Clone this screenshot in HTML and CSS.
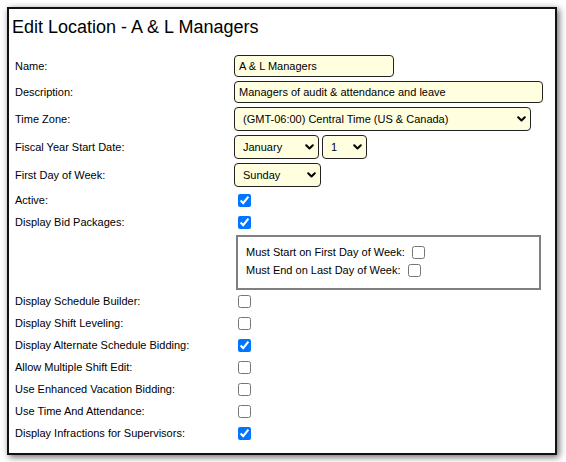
FILE: index.html
```html
<!DOCTYPE html>
<html>
<head>
<meta charset="utf-8">
<link rel="stylesheet" href="styles.css">
</head>
<body>
<div class="panel">
  <h1 class="title">Edit Location - A &amp; L Managers</h1>
  <div class="form">
    <div class="row field">
      <label class="lbl">Name:</label>
      <div class="val"><input class="txt w-name" type="text" value="A &amp; L Managers"></div>
    </div>
    <div class="row field">
      <label class="lbl">Description:</label>
      <div class="val"><input class="txt w-desc" type="text" value="Managers of audit &amp; attendance and leave"></div>
    </div>
    <div class="row field">
      <label class="lbl">Time Zone:</label>
      <div class="val">
        <span class="sel w-tz"><select><option>(GMT-06:00) Central Time (US &amp; Canada)</option></select><svg class="chev" width="9" height="6" viewBox="0 0 9 6"><polyline points="1.2,1.2 4.5,4.5 7.8,1.2" fill="none" stroke="#000" stroke-width="2" stroke-linecap="round" stroke-linejoin="round"/></svg></span>
      </div>
    </div>
    <div class="row field">
      <label class="lbl">Fiscal Year Start Date:</label>
      <div class="val pair">
        <span class="sel w-month"><select><option>January</option></select><svg class="chev" width="9" height="6" viewBox="0 0 9 6"><polyline points="1.2,1.2 4.5,4.5 7.8,1.2" fill="none" stroke="#000" stroke-width="2" stroke-linecap="round" stroke-linejoin="round"/></svg></span>
        <span class="sel w-day"><select><option>1</option></select><svg class="chev" width="9" height="6" viewBox="0 0 9 6"><polyline points="1.2,1.2 4.5,4.5 7.8,1.2" fill="none" stroke="#000" stroke-width="2" stroke-linecap="round" stroke-linejoin="round"/></svg></span>
      </div>
    </div>
    <div class="row field last-field">
      <label class="lbl">First Day of Week:</label>
      <div class="val">
        <span class="sel w-week"><select><option>Sunday</option></select><svg class="chev" width="9" height="6" viewBox="0 0 9 6"><polyline points="1.2,1.2 4.5,4.5 7.8,1.2" fill="none" stroke="#000" stroke-width="2" stroke-linecap="round" stroke-linejoin="round"/></svg></span>
      </div>
    </div>
    <div class="row chk">
      <label class="lbl">Active:</label>
      <div class="val"><input type="checkbox" checked></div>
    </div>
    <div class="row chk">
      <label class="lbl">Display Bid Packages:</label>
      <div class="val"><input type="checkbox" checked></div>
    </div>
    <div class="row boxrow">
      <div class="lbl"></div>
      <div class="subbox">
        <div class="subline">Must Start on First Day of Week: <input type="checkbox"></div>
        <div class="subline">Must End on Last Day of Week: <input type="checkbox"></div>
      </div>
    </div>
    <div class="row chk">
      <label class="lbl">Display Schedule Builder:</label>
      <div class="val"><input type="checkbox"></div>
    </div>
    <div class="row chk">
      <label class="lbl">Display Shift Leveling:</label>
      <div class="val"><input type="checkbox"></div>
    </div>
    <div class="row chk">
      <label class="lbl">Display Alternate Schedule Bidding:</label>
      <div class="val"><input type="checkbox" checked></div>
    </div>
    <div class="row chk">
      <label class="lbl">Allow Multiple Shift Edit:</label>
      <div class="val"><input type="checkbox"></div>
    </div>
    <div class="row chk">
      <label class="lbl">Use Enhanced Vacation Bidding:</label>
      <div class="val"><input type="checkbox"></div>
    </div>
    <div class="row chk">
      <label class="lbl">Use Time And Attendance:</label>
      <div class="val"><input type="checkbox"></div>
    </div>
    <div class="row chk">
      <label class="lbl">Display Infractions for Supervisors:</label>
      <div class="val"><input type="checkbox" checked></div>
    </div>
  </div>
</div>
</body>
</html>
```

FILE: styles.css
```css
html, body {
  margin: 0;
  padding: 0;
  background: #fff;
}
body {
  padding: 7px;
  font-family: "Liberation Sans", Arial, sans-serif;
  font-size: 11px;
  color: #000;
}
.panel {
  box-sizing: border-box;
  width: 550px;
  height: 448px;
  border: 2px solid #111;
  background: #fff;
  box-shadow: 2px 2px 7px rgba(0, 0, 0, 0.6);
}
.title {
  margin: 0;
  padding: 8px 0 0 3px;
  font-size: 18px;
  font-weight: normal;
  line-height: 21px;
  color: #000;
}
.form {
  margin-top: 17px;
  padding-left: 6px;
  display: flex;
  flex-direction: column;
}
.row {
  display: grid;
  grid-template-columns: 219px 1fr;
  align-items: center;
}
.field {
  margin-bottom: 4px;
}
.last-field {
  margin-bottom: 2px;
}
.chk {
  height: 22px;
}
.val {
  display: flex;
  align-items: center;
}
.pair {
  gap: 3px;
}
.lbl {
  white-space: nowrap;
}
input[type="checkbox"] {
  width: 13px;
  height: 13px;
  margin: 0 0 0 4px;
  accent-color: #0075ff;
}
.txt {
  box-sizing: border-box;
  height: 22px;
  margin: 0;
  padding: 0 4px;
  border: 1px solid #222;
  border-radius: 4px;
  background: #ffffe0;
  font-family: "Liberation Sans", Arial, sans-serif;
  font-size: 11px;
  color: #000;
  outline: none;
}
.w-name { width: 160px; }
.w-desc { width: 309px; }
.sel {
  position: relative;
  display: inline-block;
  height: 24px;
}
.sel select {
  appearance: none;
  -webkit-appearance: none;
  box-sizing: border-box;
  width: 100%;
  height: 24px;
  margin: 0;
  padding: 0 18px 0 8px;
  border: 1px solid #222;
  border-radius: 4px;
  background: #ffffe0;
  font-family: "Liberation Sans", Arial, sans-serif;
  font-size: 11px;
  color: #000;
  outline: none;
}
.chev {
  position: absolute;
  right: 5px;
  top: 9px;
  pointer-events: none;
}
.w-tz { width: 297px; }
.w-month { width: 85px; }
.w-day { width: 45px; }
.w-week { width: 87px; }
.boxrow {
  margin-top: 2px;
  align-items: start;
}
.subbox {
  box-sizing: border-box;
  width: 305px;
  height: 55px;
  margin-left: 2px;
  padding: 6px 0 0 8px;
  border: 2px solid #808080;
}
.subline {
  height: 18px;
  display: flex;
  align-items: center;
  white-space: pre;
}
.subline input[type="checkbox"] {
  margin-left: 4px;
}
```
